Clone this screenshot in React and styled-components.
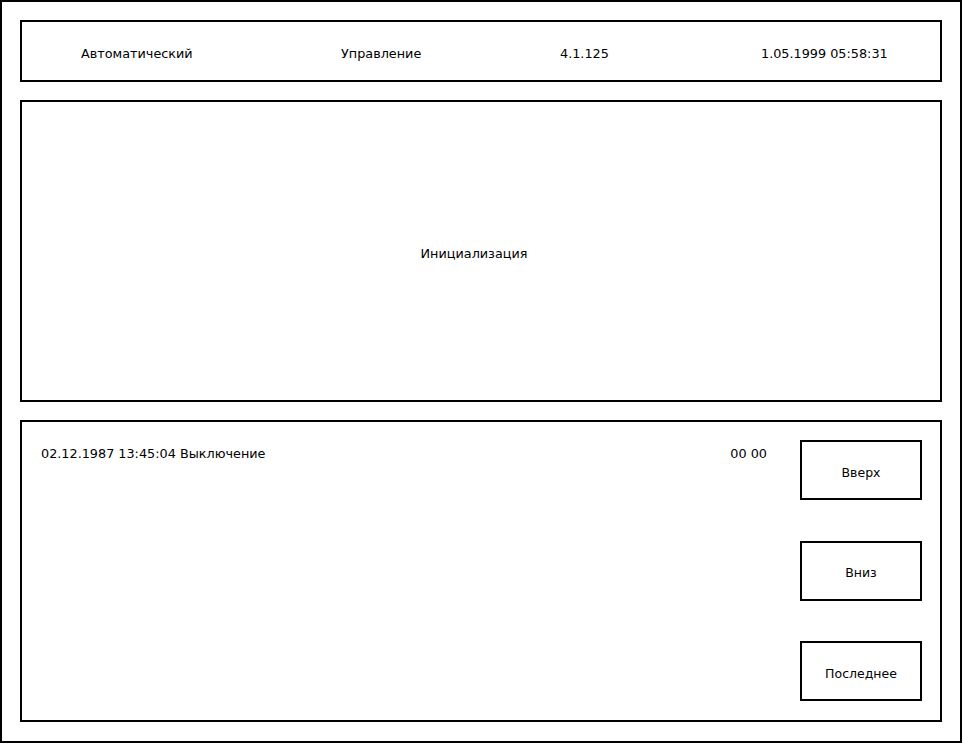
import styled, { createGlobalStyle } from 'styled-components';

const GlobalStyle = createGlobalStyle`
  body {
    margin: 0;
    background: #fff;
    font-family: "DejaVu Sans", sans-serif;
    font-size: 12.8px;
    color: #000;
  }
`;

const Screen = styled.div`
  width: 962px;
  height: 743px;
  box-sizing: border-box;
  border: 2px solid #000;
  padding: 18px;
  display: flex;
  flex-direction: column;
  gap: 18px;
`;

const Panel = styled.div`
  box-sizing: border-box;
  border: 2px solid #000;
  height: ${(p) => p.h}px;
  flex-shrink: 0;
`;

const Header = styled(Panel)`
  display: grid;
  grid-template-columns: 260px 219px 201px 1fr;
  align-items: center;
  padding: 5px 0 0 59px;
`;

const HeaderItem = styled.span`
  line-height: 15px;
  white-space: nowrap;
`;

const Status = styled(Panel)`
  display: flex;
  align-items: center;
  justify-content: center;
  padding: 4px 14px 0 0;
`;

const Journal = styled(Panel)`
  display: flex;
`;

const LogList = styled.div`
  flex: 1;
  padding: 24px 33px 0 19px;
`;

const LogRow = styled.div`
  display: flex;
  justify-content: space-between;
  line-height: 15px;
`;

const Controls = styled.div`
  display: flex;
  flex-direction: column;
  justify-content: space-between;
  padding: 18px 18px 19px 0;
`;

const NavButton = styled.button`
  width: 122px;
  height: 60px;
  box-sizing: border-box;
  border: 2px solid #000;
  background: #fff;
  color: #000;
  font-family: "DejaVu Sans", sans-serif;
  font-size: 12.5px;
  padding: 4px 0 0;
  cursor: pointer;
`;

const header = ['Автоматический', 'Управление', '4.1.125', '1.05.1999 05:58:31'];
const events = [{ text: '02.12.1987 13:45:04 Выключение', code: '00 00' }];

export default function App() {
  return (
    <>
      <GlobalStyle />
      <Screen>
        <Header h={62}>
          {header.map((t) => (
            <HeaderItem key={t}>{t}</HeaderItem>
          ))}
        </Header>
        <Status h={302}>Инициализация</Status>
        <Journal h={302}>
          <LogList>
            {events.map((e) => (
              <LogRow key={e.text}>
                <span>{e.text}</span>
                <span>{e.code}</span>
              </LogRow>
            ))}
          </LogList>
          <Controls>
            <NavButton>Вверх</NavButton>
            <NavButton>Вниз</NavButton>
            <NavButton>Последнее</NavButton>
          </Controls>
        </Journal>
      </Screen>
    </>
  );
}
